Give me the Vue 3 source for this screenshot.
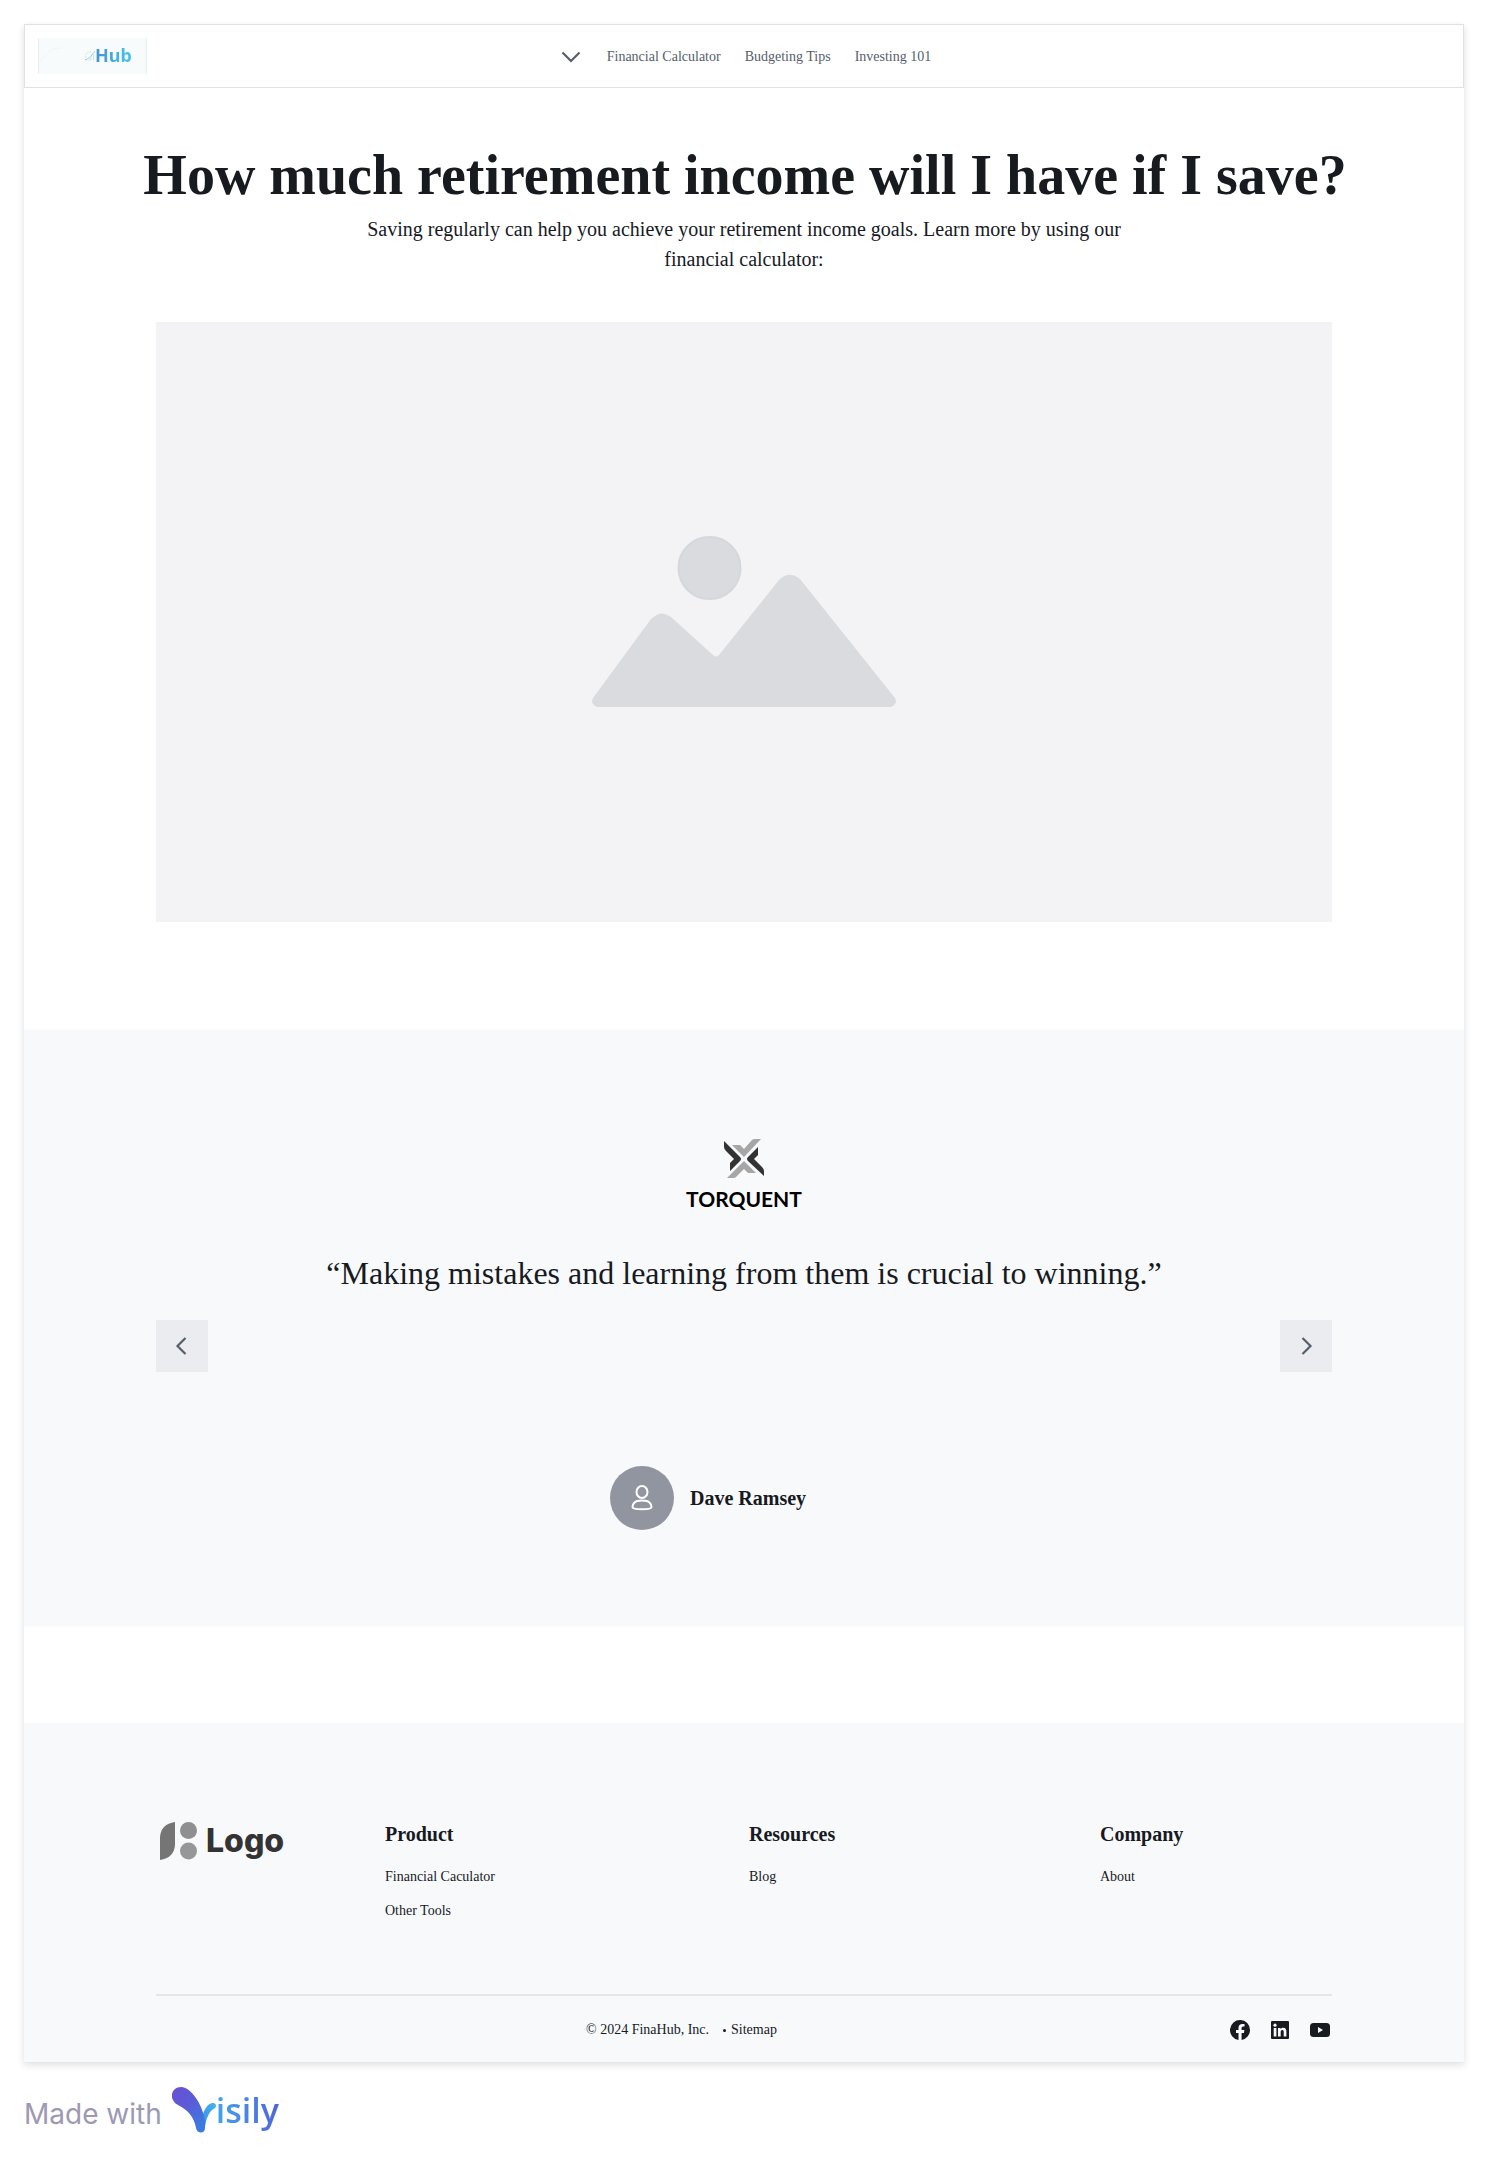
<script setup>
const navLinks = ['Financial Calculator', 'Budgeting Tips', 'Investing 101']
const columns = [
  { title: 'Product', links: ['Financial Caculator', 'Other Tools'] },
  { title: 'Resources', links: ['Blog'] },
  { title: 'Company', links: ['About'] },
]
</script>

<template>
  <div class="canvas">
    <div class="page">
      <header class="topbar">
        <a class="brand" href="#" aria-label="FinaHub">
          <svg class="brand-curve" viewBox="0 0 46 36" aria-hidden="true">
            <path d="M0 23C7 19 9 9 23 10" fill="none" stroke="#f0f5f6" stroke-width="1" />
          </svg>
          <svg class="brand-mark" viewBox="0 0 11 12" aria-hidden="true">
            <path d="M1 8C0 4 2 1 8 1" fill="none" stroke="#d5e6c0" stroke-width="1" stroke-dasharray="2 1" />
            <path d="M0 10h2l2-2 2-1 2-3 3-3" fill="none" stroke="#8fc7dc" stroke-width="1" />
            <path d="M4.500 9v2M6.500 8v3M9.500 4v7" stroke="#b5dfe2" stroke-width="1" />
          </svg>
          <span class="brand-text">Hub</span>
        </a>
        <nav class="nav">
          <button class="nav-toggle" aria-label="Open menu">
            <svg viewBox="0 0 24 24" width="24" height="24" aria-hidden="true">
              <path d="M3.500 7.500l8.500 8.500 8.500-8.500" fill="none" stroke="#565e6c" stroke-width="2.200" />
            </svg>
          </button>
          <a v-for="link in navLinks" :key="link" href="#">{{ link }}</a>
        </nav>
      </header>

      <section class="hero">
        <h1>How much retirement income will I have if I save?</h1>
        <p>Saving regularly can help you achieve your retirement income goals. Learn more by using our financial calculator:</p>
        <div class="placeholder">
          <svg viewBox="0 0 304 172" width="304" height="172" role="img" aria-label="Image placeholder">
            <circle cx="117.500" cy="32" r="31" fill="#dadbdf" stroke="#d6d7dc" stroke-width="2" />
            <path d="M1 162L59 83Q69 73 79 81L121 119Q124 122 127 119L187 44Q197 34 208 43L303 162Q306 168 299 171H5Q-2 168 1 162Z" fill="#dadbdf" />
          </svg>
        </div>
      </section>

      <section class="testimonial">
        <div class="torquent">
          <svg viewBox="0 0 40 40" width="40" height="40" aria-hidden="true">
            <path d="M8 6h8l4 4 8-9q1-1 3-1h6L20 18z" fill="#a6a6a6" />
            <path d="M20 22l12 12h-8l-4-4-8 8q-1 1-3 1H3z" fill="#a6a6a6" />
            <path d="M0 2l16 16q2 2 0 4L6 32v-8l4-4-8-8q-2-2-2-4z" fill="#333" />
            <path d="M34 8v8l-4 4 8 8q2 2 2 4v5L24 22q-2-2 0-4z" fill="#333" />
          </svg>
          <span>TORQUENT</span>
        </div>
        <blockquote>“Making mistakes and learning from them is crucial to winning.”</blockquote>
        <div class="arrows">
          <button aria-label="Previous">
            <svg viewBox="0 0 24 24" width="24" height="24" aria-hidden="true">
              <path d="M15.500 4l-8 8 8 8" fill="none" stroke="#565e6c" stroke-width="2.200" />
            </svg>
          </button>
          <button aria-label="Next">
            <svg viewBox="0 0 24 24" width="24" height="24" aria-hidden="true">
              <path d="M8.500 4l8 8-8 8" fill="none" stroke="#565e6c" stroke-width="2.200" />
            </svg>
          </button>
        </div>
        <div class="person">
          <span class="avatar">
            <svg viewBox="0 0 24 28" width="24" height="28" fill="none" stroke="#fff" stroke-width="2" aria-hidden="true">
              <ellipse cx="12" cy="8" rx="5.500" ry="6" />
              <path d="M12 16.500c4 0 6 .5 7.500 2 1.500 1.300 2 3 2 4.500 0 3-19 3-19 0 0-1.500.5-3.200 2-4.500 1.500-1.500 3.500-2 7.500-2z" />
            </svg>
          </span>
          <strong>Dave Ramsey</strong>
        </div>
      </section>

      <footer class="footer">
        <div class="footer-grid">
          <a class="logo" href="#">
            <svg viewBox="0 0 37 38" width="37" height="38" aria-hidden="true">
              <path d="M0 38V15Q1 2 15 0v23Q14 36 0 38z" fill="#757575" />
              <circle cx="28.500" cy="8.500" r="8.500" fill="#8f8f8f" />
              <circle cx="28.500" cy="29" r="8.500" fill="#979797" />
            </svg>
            <span>Logo</span>
          </a>
          <div v-for="column in columns" :key="column.title" class="column">
            <h2>{{ column.title }}</h2>
            <ul>
              <li v-for="link in column.links" :key="link"><a href="#">{{ link }}</a></li>
            </ul>
          </div>
        </div>
        <div class="legal">
          <p class="copyright">
            <span>© 2024 FinaHub, Inc.</span>
            <span class="dot" aria-hidden="true"></span>
            <a href="#">Sitemap</a>
          </p>
          <div class="social">
            <a href="#" aria-label="Facebook">
              <svg viewBox="0 0 24 24" width="24" height="24" aria-hidden="true">
                <path fill="#171a1f" d="M22 12a10 10 0 1 0-11.500 9.900v-7H8V12h2.500V9.800c0-2.500 1.500-3.900 3.800-3.900 1 0 2.200.2 2.200.2v2.400h-1.300c-1.200 0-1.600.8-1.600 1.600V12h2.800l-.5 2.900h-2.300v7A10 10 0 0 0 22 12z" />
              </svg>
            </a>
            <a href="#" aria-label="LinkedIn">
              <svg viewBox="0 0 24 24" width="24" height="24" aria-hidden="true">
                <rect x="3" y="3" width="18" height="18" rx="1" fill="#171a1f" />
                <path fill="#f8f9fb" d="M5.700 10h2.700v8.400H5.700zM10 10h2.600v1.200c.5-.8 1.400-1.400 2.600-1.400 2.600 0 3.200 1.700 3.200 4v4.600h-2.700v-4.200c0-1 0-2.200-1.400-2.200s-1.600 1.100-1.600 2.200v4.200H10z" />
                <circle cx="7" cy="7.200" r="1.600" fill="#f8f9fb" />
              </svg>
            </a>
            <a href="#" aria-label="YouTube">
              <svg viewBox="0 0 24 24" width="24" height="24" aria-hidden="true">
                <rect x="2" y="5" width="20" height="14" rx="3.500" fill="#171a1f" />
                <path d="M10 9l5 3-5 3z" fill="#f8f9fb" />
              </svg>
            </a>
          </div>
        </div>
      </footer>
    </div>

    <div class="made-with">
      <span class="made-text">Made with</span>
      <a class="visily" href="#" aria-label="Visily">
        <svg viewBox="0 0 44 46" width="44" height="46" aria-hidden="true">
          <defs>
            <linearGradient id="petal" x1="0" y1="0" x2="0.700" y2="1">
              <stop offset="0" stop-color="#6a50d3" />
              <stop offset="0.500" stop-color="#5b5bd8" />
              <stop offset="1" stop-color="#3b7be0" />
            </linearGradient>
            <linearGradient id="stem" x1="1" y1="0" x2="0" y2="1">
              <stop offset="0" stop-color="#42b5ef" />
              <stop offset="1" stop-color="#3a8fe4" />
            </linearGradient>
          </defs>
          <path d="M30 32C31 24 35 17 40 16q4-.5 4 3c0 2-2 2.500-4 4-4 4-6 10-7 17z" fill="url(#stem)" />
          <path d="M9 0C19 0 31 18 33 34v7c0 6-8 6-9 0C22 30 16 23 6 18-4 13-1 0 9 0z" fill="url(#petal)" />
        </svg>
        <span>isily</span>
      </a>
    </div>
  </div>
</template>

<style>
body {
  margin: 0;
  background: #fff;
}
</style>

<style scoped>
.canvas {
  padding: 24px 24px 32px;
  color: #171a1f;
  font-family: "Liberation Serif", "Times New Roman", serif;
}
a {
  color: inherit;
  text-decoration: none;
}
svg {
  display: block;
}
button {
  display: flex;
  align-items: center;
  justify-content: center;
  padding: 0;
  border: 0;
  background: none;
}
h1, h2, p, ul, blockquote {
  margin: 0;
}
.page {
  background: #fff;
  box-shadow: 0 3px 7px rgba(23, 26, 31, 0.14);
}
.topbar {
  display: grid;
  grid-template-columns: 1fr auto 1fr;
  align-items: center;
  box-sizing: border-box;
  height: 64px;
  padding: 0 11px 0 13px;
  border: 1px solid #dee1e6;
}
.brand {
  display: flex;
  align-items: center;
  box-sizing: border-box;
  width: 109px;
  height: 36px;
  border: solid #e9edf0;
  border-width: 0 1px;
  background: #f7fbfc;
}
.brand-curve {
  width: 46px;
  height: 36px;
}
.brand-mark {
  width: 10px;
  height: 12px;
}
.brand-text {
  padding-bottom: 2px;
  font: 700 18px/24px "Noto Sans", sans-serif;
  background: linear-gradient(90deg, #4593cf, #48c5eb);
  background-clip: text;
  color: transparent;
}
.nav {
  display: flex;
  align-items: center;
  gap: 24px;
  color: #565e6c;
  font-size: 14px;
  line-height: 24px;
  padding-top: 1px;
}
.hero {
  padding: 48px 132px 108px;
  text-align: center;
}
h1 {
  margin: 0 -24px 0 -22px;
  font-size: 56px;
  line-height: 78px;
}
.hero p {
  max-width: 780px;
  margin: 0 auto;
  font-size: 20px;
  line-height: 30px;
}
.placeholder {
  display: flex;
  align-items: center;
  justify-content: center;
  height: 600px;
  margin-top: 48px;
  background: #f3f3f5;
}
.testimonial {
  padding: 109px 132px 96px;
  background: #f8f9fb;
}
.torquent {
  display: flex;
  flex-direction: column;
  align-items: center;
  gap: 8px;
  color: #000;
  font: 700 21px/24px Lato, sans-serif;
}
blockquote {
  margin-top: 38px;
  font-size: 32px;
  line-height: 48px;
  text-align: center;
}
.arrows {
  display: flex;
  justify-content: space-between;
  margin-top: 23px;
}
.arrows button {
  width: 52px;
  height: 52px;
  background: #ebecef;
}
.person {
  display: flex;
  align-items: center;
  gap: 16px;
  width: 268px;
  margin: 94px auto 0;
  font-size: 20px;
  line-height: 30px;
}
.avatar {
  display: flex;
  align-items: center;
  justify-content: center;
  width: 64px;
  height: 64px;
  border-radius: 50%;
  background: #9095a0;
}
.footer {
  margin-top: 97px;
  padding: 96px 132px 20px;
  background: #f8f9fb;
}
.footer-grid {
  display: grid;
  grid-template-columns: 229fr 364fr 351fr 232fr;
  min-height: 175px;
}
.logo {
  display: flex;
  align-items: center;
  gap: 9px;
  height: 44px;
  padding-left: 4px;
  color: #333;
  font: 800 32px/40px Inter, sans-serif;
}
h2 {
  font-size: 20px;
  line-height: 30px;
}
.column ul {
  display: grid;
  gap: 12px;
  margin-top: 17px;
  padding: 0;
  list-style: none;
  font-size: 14px;
  line-height: 22px;
}
.legal {
  display: grid;
  grid-template-columns: 1fr auto;
  align-items: center;
  padding-top: 22px;
  border-top: 2px solid #e4e6e9;
  font-size: 14px;
  line-height: 24px;
}
.copyright {
  display: flex;
  align-items: center;
  padding-left: 430px;
}
.dot {
  width: 3px;
  height: 3px;
  margin: 0 5px 0 14px;
  border-radius: 50%;
  background: #171a1f;
}
.social {
  display: flex;
  gap: 16px;
}
.made-with {
  display: flex;
  align-items: center;
  gap: 10px;
  margin-top: 20px;
  color: #9d99b3;
  font: 400 28px/48px Inter, sans-serif;
}
.made-text {
  padding-top: 8px;
}
.visily {
  display: flex;
  align-items: center;
}
.visily span {
  font: 600 34px/48px "Open Sans", sans-serif;
  background: linear-gradient(90deg, #43a3ec, #5065dc);
  background-clip: text;
  color: transparent;
}
</style>
